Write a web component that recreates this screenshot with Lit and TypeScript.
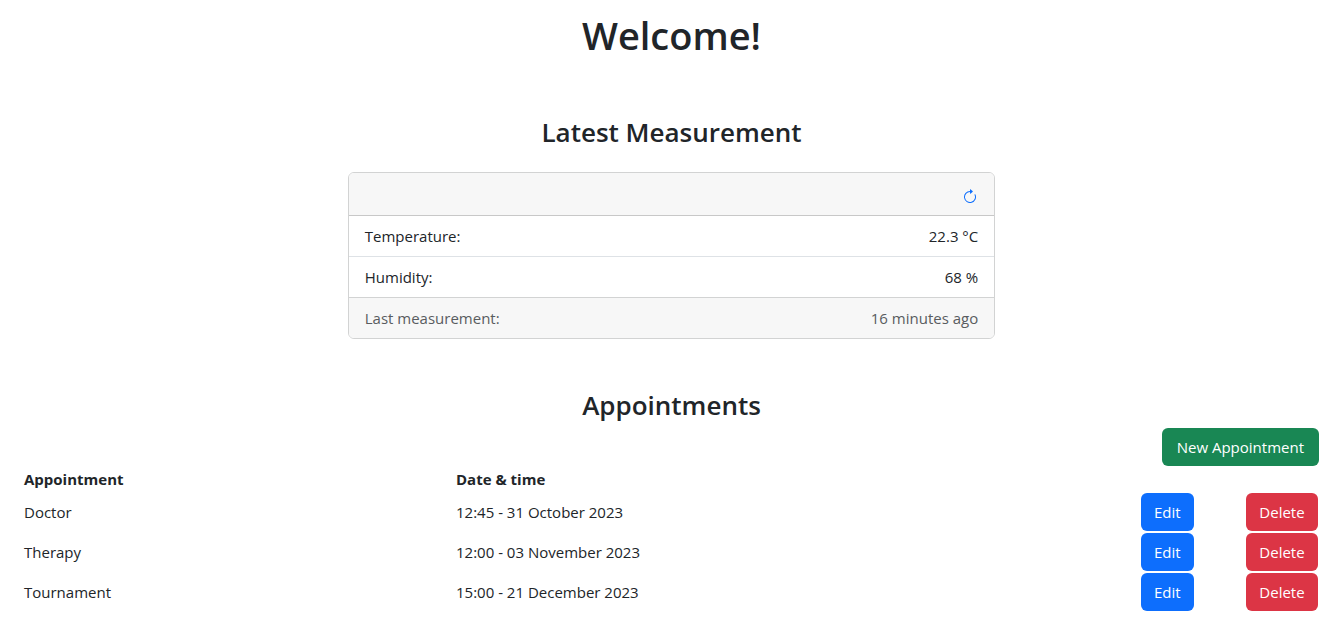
import { LitElement, html, css } from "lit";
import { customElement, state } from "lit/decorators.js";

interface Appointment {
  name: string;
  when: string;
}

@customElement("app-root")
export class AppRoot extends LitElement {
  static styles = css`
    :host {
      display: block;
      padding: 11px 24px 24px;
      box-sizing: border-box;
      background: #fff;
      color: #212529;
      font-family: "Segoe UI", "Open Sans", "Noto Sans", sans-serif;
      font-size: 15px;
      line-height: 24px;
    }
    h1,
    h2 {
      margin: 0;
      font-weight: 600;
      text-align: center;
    }
    h1 {
      font-size: 38px;
      line-height: 48px;
    }
    h2 {
      font-size: 26px;
      line-height: 34px;
    }
    .section {
      margin-top: 56px;
    }
    .section + .section {
      margin-top: 49px;
    }
    .card {
      width: 50%;
      margin: 23px auto 0;
      box-sizing: border-box;
      border: 1px solid #d2d3d3;
      border-radius: 6px;
      overflow: hidden;
    }
    .card-head {
      display: flex;
      justify-content: flex-end;
      padding: 12px 16px 6px;
      background: #f7f7f7;
      border-bottom: 1px solid #c8c8c8;
    }
    .refresh {
      display: flex;
      align-items: center;
      height: 24px;
      padding: 0;
      border: 0;
      background: none;
      color: #0d6efd;
      cursor: pointer;
    }
    .readings {
      margin: 0;
    }
    .reading {
      display: flex;
      justify-content: space-between;
      padding: 8px 16px;
    }
    .reading + .reading {
      border-top: 1px solid #dee2e6;
    }
    .reading dd {
      margin: 0;
    }
    .reading.foot {
      background: #f7f7f7;
      border-top-color: #d2d3d3;
      color: #595c5f;
    }
    .toolbar {
      display: flex;
      justify-content: flex-end;
      margin-top: 6px;
    }
    .btn {
      padding: 6px 12px;
      border: 1px solid transparent;
      border-radius: 6px;
      color: #fff;
      font: inherit;
      white-space: nowrap;
      cursor: pointer;
      display: block;
    }
    .success {
      padding: 6px 14px;
      background: #198754;
    }
    .primary {
      background: #0d6efd;
    }
    .danger {
      background: #dc3545;
    }
    table {
      width: 100%;
      border-collapse: collapse;
      table-layout: fixed;
    }
    th,
    td {
      padding: 1px 1px 1px 0;
      text-align: left;
      vertical-align: middle;
    }
    th {
      font-weight: 700;
    }
    .col-name {
      width: 33.36%;
    }
    .col-edit {
      width: 105px;
    }
    .col-delete {
      width: 73px;
    }
    td .btn.danger {
      width: 100%;
      padding: 6px 0;
    }
  `;

  @state() private appointments: Appointment[] = [
    { name: "Doctor", when: "12:45 - 31 October 2023" },
    { name: "Therapy", when: "12:00 - 03 November 2023" },
    { name: "Tournament", when: "15:00 - 21 December 2023" },
  ];

  render() {
    return html`
      <h1>Welcome!</h1>
      <section class="section">
        <h2>Latest Measurement</h2>
        <div class="card">
          <div class="card-head">
            <button class="refresh" type="button" aria-label="Refresh">
              <svg width="16" height="16" viewBox="0 0 16 16" fill="currentColor" aria-hidden="true">
                <path fill-rule="evenodd" d="M8 3a5 5 0 1 0 4.546 2.914.5.5 0 0 1 .908-.417A6 6 0 1 1 8 2z" />
                <path d="M8 4.466V.534a.25.25 0 0 1 .41-.192l2.36 1.966c.12.1.12.284 0 .384L8.41 4.658A.25.25 0 0 1 8 4.466" />
              </svg>
            </button>
          </div>
          <dl class="readings">
            <div class="reading"><dt>Temperature:</dt><dd>22.3 °C</dd></div>
            <div class="reading"><dt>Humidity:</dt><dd>68 %</dd></div>
            <div class="reading foot"><dt>Last measurement:</dt><dd>16 minutes ago</dd></div>
          </dl>
        </div>
      </section>
      <section class="section">
        <h2>Appointments</h2>
        <div class="toolbar">
          <button class="btn success" type="button">New Appointment</button>
        </div>
        <table>
          <colgroup>
            <col class="col-name" />
            <col />
            <col class="col-edit" />
            <col class="col-delete" />
          </colgroup>
          <thead>
            <tr>
              <th scope="col">Appointment</th>
              <th scope="col">Date &amp; time</th>
              <td></td>
              <td></td>
            </tr>
          </thead>
          <tbody>
            ${this.appointments.map(
              (a) => html`<tr>
                <td>${a.name}</td>
                <td>${a.when}</td>
                <td><button class="btn primary" type="button">Edit</button></td>
                <td><button class="btn danger" type="button">Delete</button></td>
              </tr>`
            )}
          </tbody>
        </table>
      </section>
    `;
  }
}
